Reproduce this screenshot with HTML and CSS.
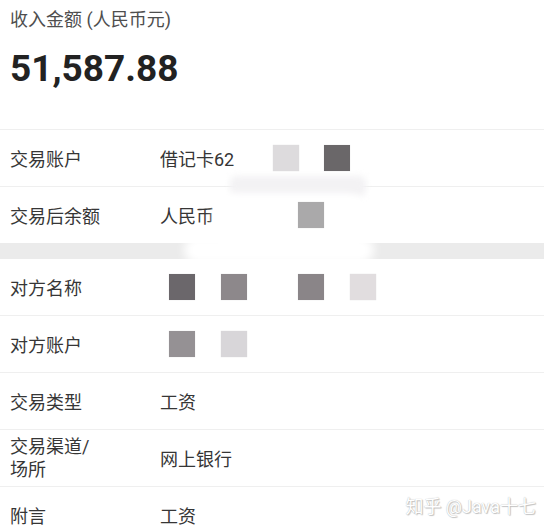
FILE: index.html
```html
<!DOCTYPE html>
<html lang="zh-CN">
<head>
    <meta charset="UTF-8">
    <meta name="viewport" content="width=device-width, initial-scale=1.0">
    <title>交易详情</title>
    <link rel="stylesheet" href="styles.css">
</head>
<body>

    <div class="page">
        <div class="summary">
            <div class="caption">收入金额 (人民币元)</div>
            <div class="amount">51,587.88</div>
        </div>

        <div class="row">
            <div class="label">交易账户</div>
            <div class="value">
                <span class="text card">借记卡62</span>
                <span class="px c-light"></span>
                <span class="px c-dark gap-25"></span>
            </div>
        </div>
        <div class="row last">
            <div class="label">交易后余额</div>
            <div class="value">
                <span class="text balance">人民币</span>
                <span class="px c-mid"></span>
            </div>
        </div>

        <div class="band"></div>

        <div class="row">
            <div class="label">对方名称</div>
            <div class="value">
                <span class="px c-dark2 lead"></span>
                <span class="px c-mid2 gap-26"></span>
                <span class="px c-mid3 gap-51"></span>
                <span class="px c-light2 gap-26"></span>
            </div>
        </div>
        <div class="row">
            <div class="label">对方账户</div>
            <div class="value">
                <span class="px c-mid4 lead"></span>
                <span class="px c-light3 gap-26"></span>
            </div>
        </div>
        <div class="row">
            <div class="label">交易类型</div>
            <div class="value">工资</div>
        </div>
        <div class="row">
            <div class="label two-line">交易渠道/<br>场所</div>
            <div class="value">网上银行</div>
        </div>
        <div class="row last">
            <div class="label">附言</div>
            <div class="value">工资</div>
        </div>

        <!-- smudge left by the screenshot editor -->
        <div class="smear"></div>
        <div class="blob"></div>
        <div class="blob blob-low"></div>

        <div class="watermark">知乎 @Java十七</div>
    </div>

</body>
</html>
```

FILE: styles.css
```css
body {
    margin: 0;
    background: #fff;
    font-family: Roboto, "Noto Sans CJK SC", sans-serif;
    color: #363636;
}
.page {
    position: relative;
    width: 544px;
    height: 530px;
    overflow: hidden;
}
.summary {
    height: 121px;
    padding: 8px 10px 0;
    border-bottom: 1px solid #efefef;
}
.caption {
    font-size: 18px;
    line-height: 24px;
    color: #4e4e4e;
}
.amount {
    margin-top: 17px;
    font-size: 37px;
    font-weight: bold;
    line-height: 40px;
    color: #222;
}
.row {
    display: flex;
    align-items: center;
    height: 56px;
    padding-left: 10px;
    border-bottom: 1px solid #efefef;
    font-size: 18px;
}
.row.last {
    border-bottom: none;
}
.label {
    width: 150px;
    flex-shrink: 0;
}
.label.two-line {
    line-height: 23px;
}
.value {
    display: flex;
    align-items: center;
}
.text {
    white-space: nowrap;
    overflow: hidden;
}
.card {
    width: 113px;
}
.balance {
    width: 138px;
}
.band {
    height: 16px;
    background: #ebebeb;
}
.px {
    position: relative;
    z-index: 2;
    width: 26px;
    height: 26px;
    box-shadow: 0 0 1px rgba(0, 0, 0, 0.15);
}
.lead {
    margin-left: 9px;
}
.gap-25 {
    margin-left: 25px;
}
.gap-26 {
    margin-left: 26px;
}
.gap-51 {
    margin-left: 51px;
}
.c-light { background: #dddbdd; }
.c-dark { background: #6a6769; }
.c-mid { background: #aaa9aa; }
.c-dark2 { background: #6b676b; }
.c-mid2 { background: #8d888b; }
.c-mid3 { background: #8a8588; }
.c-light2 { background: #e1dddf; }
.c-mid4 { background: #959194; }
.c-light3 { background: #d8d6d9; }

.smear {
    position: absolute;
    left: 230px;
    top: 176px;
    width: 136px;
    height: 20px;
    background: #f3f2f4;
    border-radius: 6px;
    filter: blur(3px);
    z-index: 1;
}
.blob {
    position: absolute;
    left: 214px;
    top: 194px;
    width: 152px;
    height: 50px;
    background: #fff;
    border-radius: 20px;
    filter: blur(5px);
    z-index: 1;
}
.blob-low {
    left: 184px;
    top: 236px;
    width: 190px;
    height: 28px;
    border-radius: 14px;
}
.watermark {
    position: absolute;
    right: 8px;
    bottom: 12px;
    font-size: 18px;
    color: #fff;
    text-shadow: 0 0 1px #aaa, 1px 1px 1px #c4c4c4;
    z-index: 3;
}
```
